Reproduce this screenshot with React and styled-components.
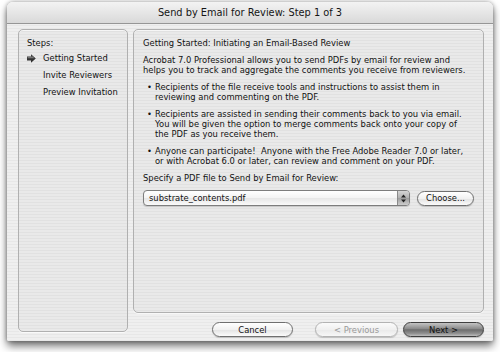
import React from "react";
import styled, { createGlobalStyle } from "styled-components";

const Global = createGlobalStyle`
  html, body { margin: 0; padding: 0; background: #ffffff; }
  body { width: 500px; height: 352px; overflow: hidden; font-family: "DejaVu Sans", "Liberation Sans", sans-serif; }
`;

const Page = styled.div`
  width: 500px;
  height: 352px;
  padding: 2px 7px 0 7px;
  box-sizing: border-box;
`;

const Window = styled.div`
  width: 486px;
  height: 339px;
  border-radius: 6px 6px 2px 2px;
  overflow: hidden;
  display: flex;
  flex-direction: column;
  background: repeating-linear-gradient(to bottom, #efefef 0px, #efefef 2px, #e7e7e7 2px, #e7e7e7 3px);
  box-shadow: 0 5px 9px rgba(0, 0, 0, 0.55), 0 0 4px rgba(0, 0, 0, 0.35);
`;

const TitleBar = styled.div`
  height: 21px;
  flex: none;
  display: flex;
  align-items: center;
  justify-content: center;
  background: linear-gradient(to bottom, #f3f3f3, #d9d9d9);
  border-bottom: 1px solid #969696;
  font-size: 9.8px;
  color: #151515;
`;

const Body = styled.div`
  flex: 1;
  display: flex;
  gap: 5px;
  padding: 5px 9px 0 11px;
`;

const GroupBox = styled.div`
  box-sizing: border-box;
  border: 1px solid #b0b0b0;
  border-radius: 5px;
  background: rgba(0, 0, 0, 0.025);
  box-shadow: inset 0 1px 0 rgba(255, 255, 255, 0.6), 0 1px 0 rgba(255, 255, 255, 0.7);
`;

const StepsBox = styled(GroupBox)`
  width: 110px;
  height: 303px;
  padding: 8px 0 0 8px;
  font-size: 8.4px;
  line-height: 10px;
  color: #111;
`;

const StepsLabel = styled.div`
  margin-bottom: 5px;
`;

const StepItem = styled.div`
  display: flex;
  align-items: center;
  height: 10px;
  margin-bottom: 7px;
  white-space: nowrap;
`;

const StepMark = styled.span`
  width: 16px;
  flex: none;
  display: flex;
  align-items: center;
`;

const RightCol = styled.div`
  width: 351px;
  display: flex;
  flex-direction: column;
`;

const ContentBox = styled(GroupBox)`
  height: 284px;
  padding: 8px 0 0 9px;
  font-size: 8.4px;
  line-height: 10px;
  color: #111;
  white-space: nowrap;
`;

const Para = styled.p`
  margin: 0 0 7px 0;
`;

const Bullet = styled.div`
  display: flex;
  margin: 0 0 7px 0;
`;

const Dot = styled.span`
  flex: none;
  padding-left: 4px;
  width: 8px;
`;

const FileRow = styled.div`
  display: flex;
  gap: 7px;
  margin-top: 7px;
  align-items: center;
`;

const Popup = styled.div`
  width: 267px;
  height: 16px;
  box-sizing: border-box;
  border: 1px solid #7d7d7d;
  border-radius: 4px;
  display: flex;
  overflow: hidden;
  background: linear-gradient(to bottom, #ffffff, #f3f3f3 50%, #e6e6e6 51%, #fafafa);
  box-shadow: 0 1px 1px rgba(0, 0, 0, 0.15);
`;

const PopupText = styled.span`
  flex: 1;
  padding-left: 5px;
  line-height: 14px;
`;

const PopupArrows = styled.span`
  width: 11px;
  border-left: 1px solid #8a8a8a;
  background: linear-gradient(to bottom, #d6d6d6, #b0b0b0 50%, #9c9c9c 51%, #cdcdcd);
  display: flex;
  align-items: center;
  justify-content: center;
`;

const ButtonRow = styled.div`
  display: flex;
  justify-content: flex-end;
  margin-top: 9px;
`;

const Button = styled.div`
  width: ${(p) => p.$w}px;
  height: 15px;
  margin-left: ${(p) => p.$ml || 0}px;
  box-sizing: border-box;
  border-radius: 8px;
  display: flex;
  align-items: center;
  justify-content: center;
  font-size: 8.4px;
  white-space: nowrap;
  color: ${(p) => (p.$disabled ? "#9a9a9a" : "#111")};
  border: 1px solid ${(p) => (p.$default ? "#3f3f3f" : p.$disabled ? "#b3b3b3" : "#6f6f6f")};
  background: ${(p) =>
    p.$default
      ? "linear-gradient(to bottom, #c4c4c4 0%, #8a8a8a 45%, #6d6d6d 52%, #8f8f8f 80%, #bdbdbd 100%)"
      : p.$disabled
      ? "linear-gradient(to bottom, #fbfbfb, #f0f0f0 50%, #e9e9e9 51%, #f7f7f7)"
      : "linear-gradient(to bottom, #ffffff, #f1f1f1 50%, #e2e2e2 51%, #fbfbfb)"};
  box-shadow: 0 1px 1px rgba(0, 0, 0, 0.18);
`;

function Arrow() {
  return (
    <svg width="9" height="9" viewBox="0 0 9 9">
      <polygon points="0,2.6 4,2.6 4,0.2 8.8,4.5 4,8.8 4,6.4 0,6.4" fill="#333" />
      <polygon points="0.6,3.1 4.5,3.1 4.5,1.4 7.6,4.3 4.5,4.3 0.6,4.3" fill="#777" />
    </svg>
  );
}

function UpDown() {
  return (
    <svg width="5" height="9" viewBox="0 0 5 9">
      <polygon points="2.5,0.5 5,3.5 0,3.5" fill="#222" />
      <polygon points="0,5.5 5,5.5 2.5,8.5" fill="#222" />
    </svg>
  );
}

export default function App() {
  return (
    <>
      <Global />
      <Page>
        <Window>
          <TitleBar>Send by Email for Review: Step 1 of 3</TitleBar>
          <Body>
            <StepsBox>
              <StepsLabel>Steps:</StepsLabel>
              <StepItem>
                <StepMark>
                  <Arrow />
                </StepMark>
                Getting Started
              </StepItem>
              <StepItem>
                <StepMark />
                Invite Reviewers
              </StepItem>
              <StepItem>
                <StepMark />
                Preview Invitation
              </StepItem>
            </StepsBox>
            <RightCol>
              <ContentBox>
                <Para>Getting Started: Initiating an Email-Based Review</Para>
                <Para>
                  Acrobat 7.0 Professional allows you to send PDFs by email for review and
                  <br />
                  helps you to track and aggregate the comments you receive from reviewers.
                </Para>
                <Bullet>
                  <Dot>•</Dot>
                  <span>
                    Recipients of the file receive tools and instructions to assist them in
                    <br />
                    reviewing and commenting on the PDF.
                  </span>
                </Bullet>
                <Bullet>
                  <Dot>•</Dot>
                  <span>
                    Recipients are assisted in sending their comments back to you via email.
                    <br />
                    You will be given the option to merge comments back onto your copy of
                    <br />
                    the PDF as you receive them.
                  </span>
                </Bullet>
                <Bullet>
                  <Dot>•</Dot>
                  <span>
                    Anyone can participate!&nbsp; Anyone with the Free Adobe Reader 7.0 or later,
                    <br />
                    or with Acrobat 6.0 or later, can review and comment on your PDF.
                  </span>
                </Bullet>
                <div>Specify a PDF file to Send by Email for Review:</div>
                <FileRow>
                  <Popup>
                    <PopupText>substrate_contents.pdf</PopupText>
                    <PopupArrows>
                      <UpDown />
                    </PopupArrows>
                  </Popup>
                  <Button $w={57}>Choose...</Button>
                </FileRow>
              </ContentBox>
              <ButtonRow>
                <Button $w={81}>Cancel</Button>
                <Button $w={83} $ml={22} $disabled>
                  &lt; Previous
                </Button>
                <Button $w={81} $ml={5} $default>
                  Next &gt;
                </Button>
              </ButtonRow>
            </RightCol>
          </Body>
        </Window>
      </Page>
    </>
  );
}
